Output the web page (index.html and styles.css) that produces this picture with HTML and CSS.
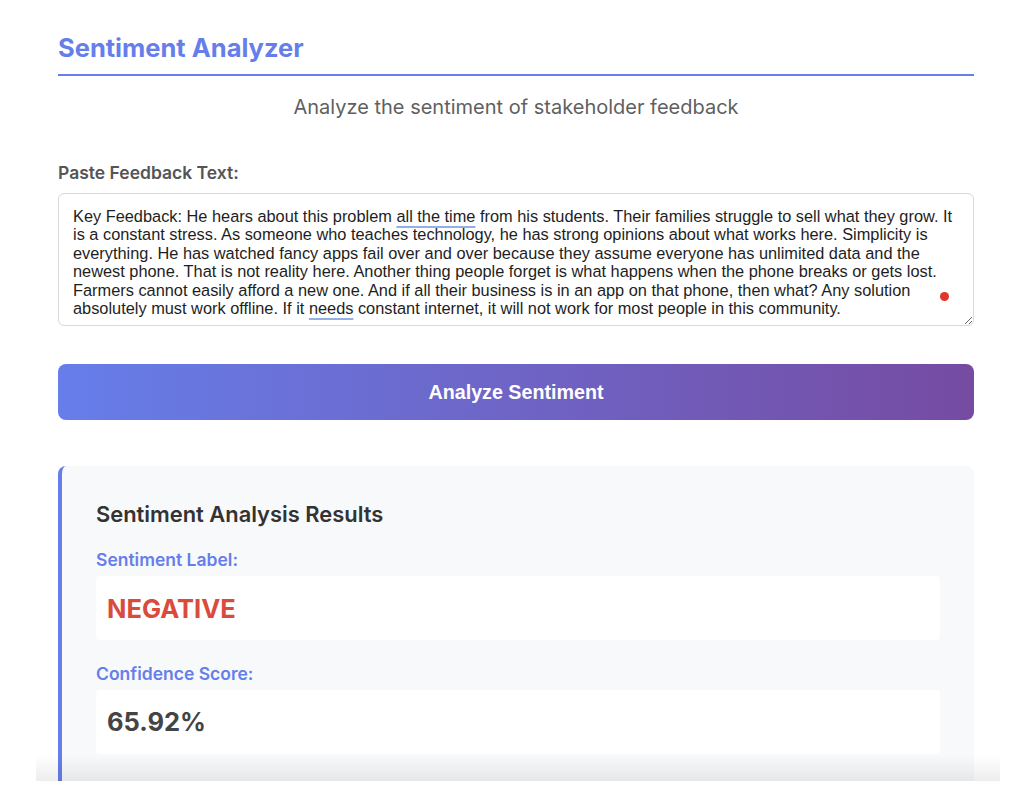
FILE: index.html
```html
<!DOCTYPE html>
<html lang="en">
<head>
<meta charset="utf-8">
<title>Sentiment Analyzer</title>
<link rel="stylesheet" href="styles.css">
</head>
<body>
<main class="page">
  <h1 class="title">Sentiment Analyzer</h1>
  <p class="subtitle">Analyze the sentiment of stakeholder feedback</p>

  <label class="field-label">Paste Feedback Text:</label>
  <div class="textbox">
    <div class="textbox-text">Key Feedback: He hears about this problem <span class="spell">all the time</span> from his students. Their families struggle to sell what they grow. It<br>is a constant stress. As someone who teaches technology, he has strong opinions about what works here. Simplicity is<br>everything. He has watched fancy apps fail over and over because they assume everyone has unlimited data and the<br>newest phone. That is not reality here. Another thing people forget is what happens when the phone breaks or gets lost.<br>Farmers cannot easily afford a new one. And if all their business is in an app on that phone, then what? Any solution<br>absolutely must work offline. If it <span class="spell">needs</span> constant internet, it will not work for most people in this community.</div>
    <span class="grammar-dot"></span>
  </div>

  <button class="analyze-btn" type="button">Analyze Sentiment</button>

  <section class="results">
    <h2 class="results-title">Sentiment Analysis Results</h2>
    <div class="result-label">Sentiment Label:</div>
    <div class="result-box"><span class="value negative">NEGATIVE</span></div>
    <div class="result-label">Confidence Score:</div>
    <div class="result-box"><span class="value">65.92%</span></div>
  </section>
</main>
<div class="bottom-fade"></div>
</body>
</html>
```

FILE: styles.css
```css
html, body {
  margin: 0;
  padding: 0;
  background: #ffffff;
}

body {
  font-family: Inter, "Noto Sans", "Liberation Sans", sans-serif;
  color: #333;
  height: 786px;
  overflow: hidden;
}

.page {
  width: 916px;
  margin-left: 58px;
  padding-top: 30px;
  display: flex;
  flex-direction: column;
}

.title {
  margin: 0;
  font-size: 25.5px;
  font-weight: 700;
  color: #667eea;
  line-height: 36px;
  padding-bottom: 8px;
  border-bottom: 2px solid #667eea;
}

.subtitle {
  margin: 19px 0 0;
  text-align: center;
  font-size: 20px;
  line-height: 24px;
  color: #5f5f5f;
}

.field-label {
  margin-top: 44px;
  font-size: 17.5px;
  font-weight: 600;
  line-height: 20px;
  color: #555;
}

.textbox {
  position: relative;
  margin-top: 10px;
  height: 131px;
  border: 1px solid #d9d9d9;
  border-radius: 6px;
  box-sizing: content-box;
  overflow: hidden;
  resize: both;
  background: #fff;
}

.textbox-text {
  padding: 13px 14px 8px;
  font-family: "Liberation Sans", Arial, sans-serif;
  font-size: 16.35px;
  line-height: 18.4px;
  color: #1e1e1e;
  white-space: nowrap;
}

.spell {
  text-decoration: underline;
  text-decoration-color: #93b0e6;
  text-decoration-thickness: 2px;
  text-underline-offset: 4px;
}

.grammar-dot {
  position: absolute;
  left: 881px;
  top: 98px;
  width: 9px;
  height: 9px;
  border-radius: 50%;
  background: #e0352b;
}

.analyze-btn {
  margin-top: 38px;
  height: 56px;
  border: none;
  border-radius: 8px;
  background: linear-gradient(90deg, #667eea 0%, #764ba2 100%);
  color: #fff;
  font-family: "Liberation Sans", Arial, sans-serif;
  font-size: 19.7px;
  font-weight: 700;
  cursor: pointer;
}

.results {
  margin-top: 46px;
  background: #f8f9fb;
  border-left: 4px solid #667eea;
  border-radius: 8px;
  padding: 35px 34px 60px;
  display: flex;
  flex-direction: column;
}

.results-title {
  margin: 0;
  font-size: 21.9px;
  font-weight: 600;
  line-height: 26px;
  color: #333;
}

.result-label {
  margin-top: 22px;
  font-size: 17.5px;
  font-weight: 600;
  line-height: 21px;
  color: #667eea;
}

.result-box + .result-label {
  margin-top: 22.5px;
}

.result-box {
  margin-top: 6px;
  background: #fff;
  border-radius: 4px;
  padding: 16.5px 11px;
}

.value {
  display: block;
  font-size: 25.5px;
  font-weight: 700;
  line-height: 31px;
  color: #444;
}

.value.negative {
  color: #d94b3b;
}

.bottom-fade {
  position: fixed;
  left: 36px;
  right: 24px;
  bottom: 5px;
  height: 26px;
  background: linear-gradient(to bottom, rgba(0,0,0,0) 0%, rgba(0,0,0,0.07) 100%);
  pointer-events: none;
}

.bottom-fade::after {
  content: "";
  position: fixed;
  left: 0;
  right: 0;
  bottom: 0;
  height: 5px;
  background: #fff;
}
```
